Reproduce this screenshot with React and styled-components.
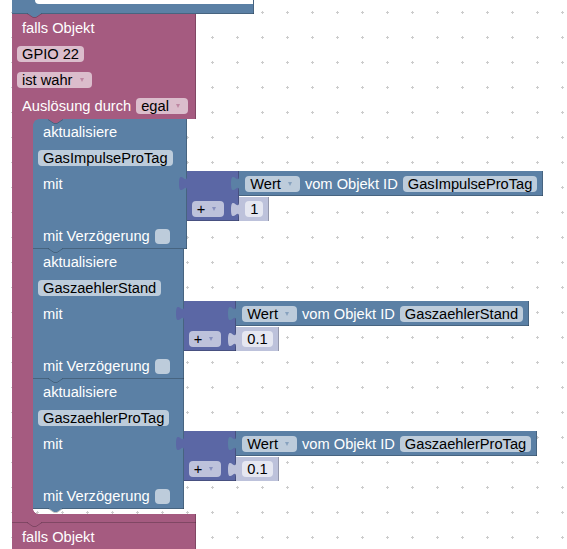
import React from "react";
import styled, { createGlobalStyle } from "styled-components";

const C = {
  pink: "#a55b80",
  pinkField: "#dbbdcc",
  blue: "#5b80a5",
  blueField: "#bdccdb",
  purple: "#5b67a5",
  purpleField: "#bdc2db",
  shadow: "#bdc2db",
  shadowField: "#e5e7f1",
  dark: "rgba(0,0,0,0.22)",
};

const Global = createGlobalStyle`
  *, *::before, *::after { box-sizing: border-box; }
  html, body { margin: 0; padding: 0; background: #fff; }
  body { font-family: "Liberation Sans", Arial, sans-serif; }
`;

const Workspace = styled.div`
  position: relative;
  width: 567px;
  height: 549px;
  overflow: hidden;
  background: #fff;
`;

const GridLayer = styled.svg`
  position: absolute;
  inset: 0;
  width: 100%;
  height: 100%;
  display: block;
`;

const Canvas = styled.div`
  position: relative;
  display: flex;
  flex-direction: column;
  align-items: flex-start;
  padding-left: 12px;
  font-family: "Liberation Sans", Arial, sans-serif;
  font-size: 14.67px;
`;

/* ---------- connectors ---------- */

const NotchSvg = styled.svg`
  position: absolute;
  left: 15px;
  ${(p) => (p.$at === "top" ? "top: 0;" : "top: calc(100% - 1px);")}
  display: block;
  overflow: visible;
  z-index: 3;
`;

function Notch({ color, at = "bottom" }) {
  return (
    <NotchSvg $at={at} width="15" height="5" viewBox="0 0 15 5" aria-hidden="true">
      <path d="M0 0 L6 4 L9 4 L15 0 Z" fill={color} />
      <path d="M0 0.5 L6 4.5 L9 4.5 L15 0.5" fill="none" stroke={C.dark} strokeWidth="1" />
    </NotchSvg>
  );
}

const TabSvg = styled.svg`
  position: absolute;
  left: -8px;
  top: 5px;
  display: block;
  overflow: visible;
  z-index: 2;
`;

function PuzzleTab({ color }) {
  return (
    <TabSvg width="9" height="15" viewBox="0 0 9 15" aria-hidden="true">
      <path d="M9 0 H8 C8 10 0 -8 0 7.5 S8 5 8 15 H9 Z" fill={color} />
    </TabSvg>
  );
}

/* ---------- fields ---------- */

const Label = styled.span`
  color: #fff;
  padding: 0 5px;
  white-space: nowrap;
  line-height: 16px;
`;

const Field = styled.span`
  display: inline-flex;
  align-items: center;
  height: 16px;
  padding: 0 5px;
  border-radius: 4px;
  background: ${(p) => p.$bg};
  color: #000;
  white-space: nowrap;
  line-height: 16px;
`;

const Arrow = styled.span`
  width: 0;
  height: 0;
  margin-left: 7px;
  margin-right: 3px;
  border-left: 2.5px solid transparent;
  border-right: 2.5px solid transparent;
  border-top: 4px solid ${(p) => p.$color};
  opacity: 0.55;
`;

function Dropdown({ bg, color, children }) {
  return (
    <Field $bg={bg}>
      {children}
      <Arrow $color={color} />
    </Field>
  );
}

const Checkbox = styled.span`
  width: 15px;
  height: 15px;
  border-radius: 4px;
  background: ${(p) => p.$bg};
`;

/* ---------- top stack (cut off above) ---------- */

const TopArm = styled.div`
  position: relative;
  display: flex;
  width: 242px;
  height: 14px;
  background: ${C.blue};
  box-shadow: inset 0 -1px 0 ${C.dark}, inset -1px 0 0 ${C.dark};
`;

const TopArmHole = styled.div`
  flex: 1;
  height: 4px;
  margin-left: 23px;
  margin-right: 1px;
  background: #fff;
  border-bottom-left-radius: 5px;
`;

/* ---------- C-shaped event block ---------- */

const CBlock = styled.div`
  position: relative;
  display: flex;
  flex-direction: column;
  min-width: ${(p) => p.$minWidth || 0}px;
`;

const CHead = styled.div`
  display: flex;
  flex-direction: column;
  padding: 1px 8px 0 5px;
  background: ${C.pink};
  box-shadow: inset -1px 0 0 ${C.dark};
`;

const Row = styled.div`
  display: flex;
  align-items: center;
  height: ${(p) => p.$h || 26}px;
`;

const CMiddle = styled.div`
  display: flex;
`;

const CArm = styled.div`
  width: 21px;
  background: ${C.pink};
`;

const CInput = styled.div`
  position: relative;
  width: 0;
  min-width: 0;
  display: flex;
  flex-direction: column;

  &::before {
    content: "";
    position: absolute;
    left: 0;
    top: 0;
    width: 6px;
    height: 6px;
    z-index: 2;
    background: radial-gradient(circle at 100% 100%, transparent 5.5px, ${C.pink} 6px);
  }
`;

const Stack = styled.div`
  display: flex;
  flex-direction: column;
  width: max-content;
`;

const CGap = styled.div`
  position: relative;
  height: 5px;

  &::before {
    content: "";
    position: absolute;
    left: 0;
    bottom: 0;
    width: 5px;
    height: 5px;
    background: radial-gradient(circle at 100% 0, transparent 4.5px, ${C.pink} 5px);
  }
`;

const CFoot = styled.div`
  height: 9px;
  background: ${C.pink};
  box-shadow: inset 0 -1px 0 ${C.dark}, inset -1px 0 0 ${C.dark};
`;

/* ---------- generic block with rows + attached inputs ---------- */

const Block = styled.div`
  position: relative;
  display: grid;
  grid-template-columns: max-content max-content;
  justify-content: start;
`;

const Body = styled.div`
  grid-column: 1;
  display: flex;
  align-items: ${(p) => (p.$top ? "flex-start" : "center")};
  min-height: ${(p) => p.$h || 26}px;
  padding: 0 ${(p) => p.$pr ?? 5}px 0 ${(p) => p.$pl ?? 5}px;
  background: ${(p) => p.$color};
  box-shadow: inset -1px 0 0 ${C.dark}
    ${(p) => (p.$last ? `, inset 0 -1px 0 ${C.dark}` : "")};
`;

const Attach = styled.div`
  grid-column: 2;
  align-self: start;
  display: flex;
`;

/* ---------- blocks ---------- */

function ShadowNumber({ children }) {
  return (
    <Block>
      <PuzzleTab color={C.shadow} />
      <Body $color={C.shadow} $h={24} $pl={6} $pr={6}>
        <Field $bg={C.shadowField}>{children}</Field>
      </Body>
    </Block>
  );
}

function ObjectValue({ id }) {
  return (
    <Block>
      <PuzzleTab color={C.blue} />
      <Body $color={C.blue} $h={25} $pl={6} $pr={6} $last>
        <Dropdown bg={C.blueField} color={C.blue}>
          Wert
        </Dropdown>
        <Label>vom Objekt ID</Label>
        <Field $bg={C.blueField}>{id}</Field>
      </Body>
    </Block>
  );
}

function MathBlock({ id, amount }) {
  return (
    <Block>
      <PuzzleTab color={C.purple} />
      <Body $color={C.purple} $h={26} $pr={15} />
      <Attach>
        <ObjectValue id={id} />
      </Attach>
      <Body $color={C.purple} $h={24} $pr={15} $last>
        <Dropdown bg={C.purpleField} color={C.purple}>
          +
        </Dropdown>
      </Body>
      <Attach>
        <ShadowNumber>{amount}</ShadowNumber>
      </Attach>
    </Block>
  );
}

function UpdateBlock({ id, amount }) {
  return (
    <Block>
      <Body $color={C.blue} $pr={14}>
        <Label>aktualisiere</Label>
      </Body>
      <Body $color={C.blue} $pr={14}>
        <Field $bg={C.blueField}>{id}</Field>
      </Body>
      <Body $color={C.blue} $pr={14} $h={52} $top>
        <Row>
          <Label>mit</Label>
        </Row>
      </Body>
      <Attach>
        <MathBlock id={id} amount={amount} />
      </Attach>
      <Body $color={C.blue} $pr={14} $last>
        <Label>mit Verzögerung</Label>
        <Checkbox $bg={C.blueField} />
      </Body>
      <Notch color={C.blue} />
    </Block>
  );
}

const updates = [
  { id: "GasImpulseProTag", amount: "1" },
  { id: "GaszaehlerStand", amount: "0.1" },
  { id: "GaszaehlerProTag", amount: "0.1" },
];

export default function App() {
  return (
    <>
      <Global />
      <Workspace>
        <GridLayer aria-hidden="true">
          <defs>
            <pattern id="ws-grid" width="25" height="25" patternUnits="userSpaceOnUse">
              <rect x="11" y="12" width="3" height="1" fill="#ccc" />
              <rect x="12" y="11" width="1" height="3" fill="#ccc" />
            </pattern>
          </defs>
          <rect width="100%" height="100%" fill="url(#ws-grid)" />
        </GridLayer>

        <Canvas>
          <TopArm>
            <TopArmHole />
            <Notch color={C.blue} />
          </TopArm>

          <CBlock>
            <CHead>
              <Row>
                <Label>falls Objekt</Label>
              </Row>
              <Row>
                <Field $bg={C.pinkField}>GPIO 22</Field>
              </Row>
              <Row>
                <Dropdown bg={C.pinkField} color={C.pink}>
                  ist wahr
                </Dropdown>
              </Row>
              <Row>
                <Label>Auslösung durch</Label>
                <Dropdown bg={C.pinkField} color={C.pink}>
                  egal
                </Dropdown>
              </Row>
            </CHead>
            <CMiddle>
              <CArm />
              <CInput>
                <Notch color={C.pink} at="top" />
                <Stack>
                  {updates.map((u) => (
                    <UpdateBlock key={u.id} id={u.id} amount={u.amount} />
                  ))}
                </Stack>
                <CGap />
              </CInput>
            </CMiddle>
            <CFoot />
            <Notch color={C.pink} />
          </CBlock>

          <CBlock $minWidth={184}>
            <CHead>
              <Row>
                <Label>falls Objekt</Label>
              </Row>
            </CHead>
          </CBlock>
        </Canvas>
      </Workspace>
    </>
  );
}
